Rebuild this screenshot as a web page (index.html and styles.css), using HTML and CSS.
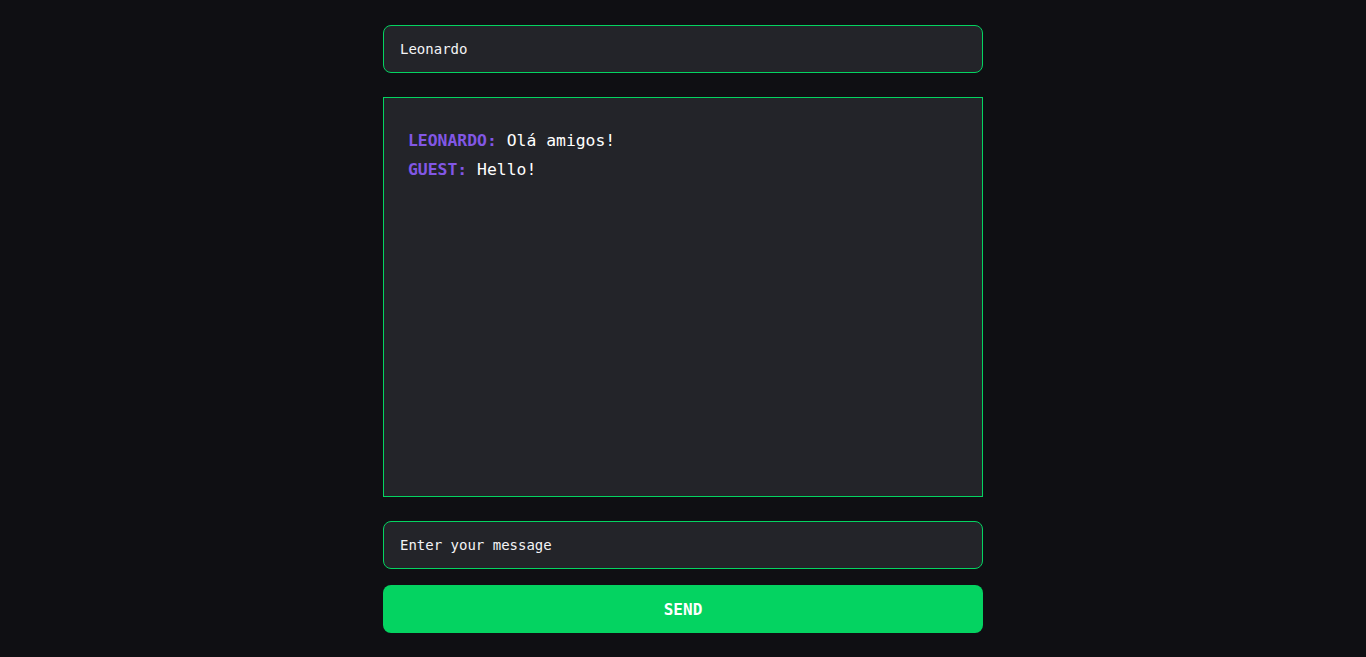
FILE: index.html
```html
<!DOCTYPE html>
<html lang="pt-BR">
<head>
<meta charset="utf-8">
<title>Chat</title>
<link rel="stylesheet" href="styles.css">
</head>
<body>
<main class="chat">
  <div class="field">Leonardo</div>
  <ul class="messages">
    <li><span class="author">LEONARDO:</span> Olá amigos!</li>
    <li><span class="author">GUEST:</span> Hello!</li>
  </ul>
  <div class="field">Enter your message</div>
  <button class="send" type="button">SEND</button>
</main>
</body>
</html>
```
FILE: styles.css
```css
* { box-sizing: border-box; }
html, body { margin: 0; padding: 0; }
body {
  background: #0f0f13;
  color: #e1e1e6;
  font-family: "DejaVu Sans Mono", "Liberation Mono", monospace;
}
.chat {
  width: 600px;
  margin: 0 auto;
  padding: 25px 0 24px;
  display: flex;
  flex-direction: column;
}
.field {
  height: 48px;
  border: 1px solid #04d361;
  border-radius: 8px;
  background: #232429;
  padding: 0 16px;
  display: flex;
  align-items: center;
  font-size: 14px;
  color: #f4f4f6;
}
.messages {
  list-style: none;
  margin: 24px 0;
  height: 400px;
  border: 1px solid #04d361;
  background: #232429;
  padding: 28px 24px;
  font-size: 16.4px;
  line-height: 29px;
  color: #ffffff;
}
.author {
  color: #8257e5;
  font-weight: bold;
}
.send {
  margin-top: 16px;
  height: 48px;
  border: 0;
  border-radius: 8px;
  background: #04d361;
  color: #ffffff;
  font-family: inherit;
  font-size: 16px;
  font-weight: bold;
}
```
